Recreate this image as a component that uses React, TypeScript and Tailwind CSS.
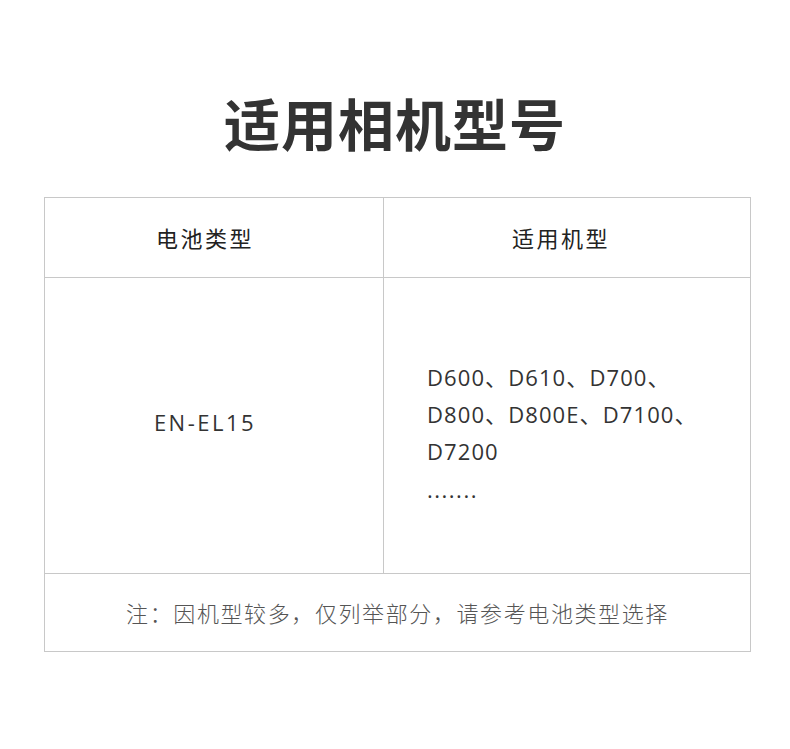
import React from "react";

const cjk = "font-['Noto_Sans_CJK_SC','Noto_Sans',sans-serif]";

const models = ["D600、D610、D700、", "D800、D800E、D7100、", "D7200"];

export default function App() {
  return (
    <div className={`min-h-[749px] w-[790px] bg-white ${cjk}`}>
      <h1 className="pt-[82px] text-center text-[56px] font-bold leading-[80px] tracking-[1px] text-[#333]">
        适用相机型号
      </h1>
      <div className="mx-[44px] mt-[35px] w-[707px] border border-[#c8c8c8]">
        <div className="grid h-[80px] grid-cols-[339px_1fr] border-b border-[#c8c8c8]">
          <div className="flex items-center justify-center border-r border-[#c8c8c8] pr-[18px] text-[22px] font-normal tracking-[2.5px] text-[#222]">
            电池类型
          </div>
          <div className="flex items-center justify-center pr-[12px] text-[22px] font-normal tracking-[2.5px] text-[#222]">
            适用机型
          </div>
        </div>
        <div className="grid h-[296px] grid-cols-[339px_1fr] border-b border-[#c8c8c8]">
          <div className="flex items-center justify-center border-r border-[#c8c8c8] pb-[6px] pr-[18px] font-['Open_Sans','Noto_Sans',sans-serif] text-[22px] tracking-[2.5px] text-[#333]">
            EN-EL15
          </div>
          <div className="flex flex-col justify-center pl-[43px] pt-[16px] font-['Open_Sans','Noto_Sans_CJK_SC',sans-serif] text-[22px] leading-[37px] tracking-[1.1px] text-[#333]">
            {models.map((m) => (
              <div key={m}>{m}</div>
            ))}
            <div className="leading-[38px] tracking-[1.5px]">.......</div>
          </div>
        </div>
        <div className="flex h-[77px] items-center justify-center text-[22px] font-light tracking-[1.6px] text-[#555]">
          注：因机型较多，仅列举部分，请参考电池类型选择
        </div>
      </div>
    </div>
  );
}
